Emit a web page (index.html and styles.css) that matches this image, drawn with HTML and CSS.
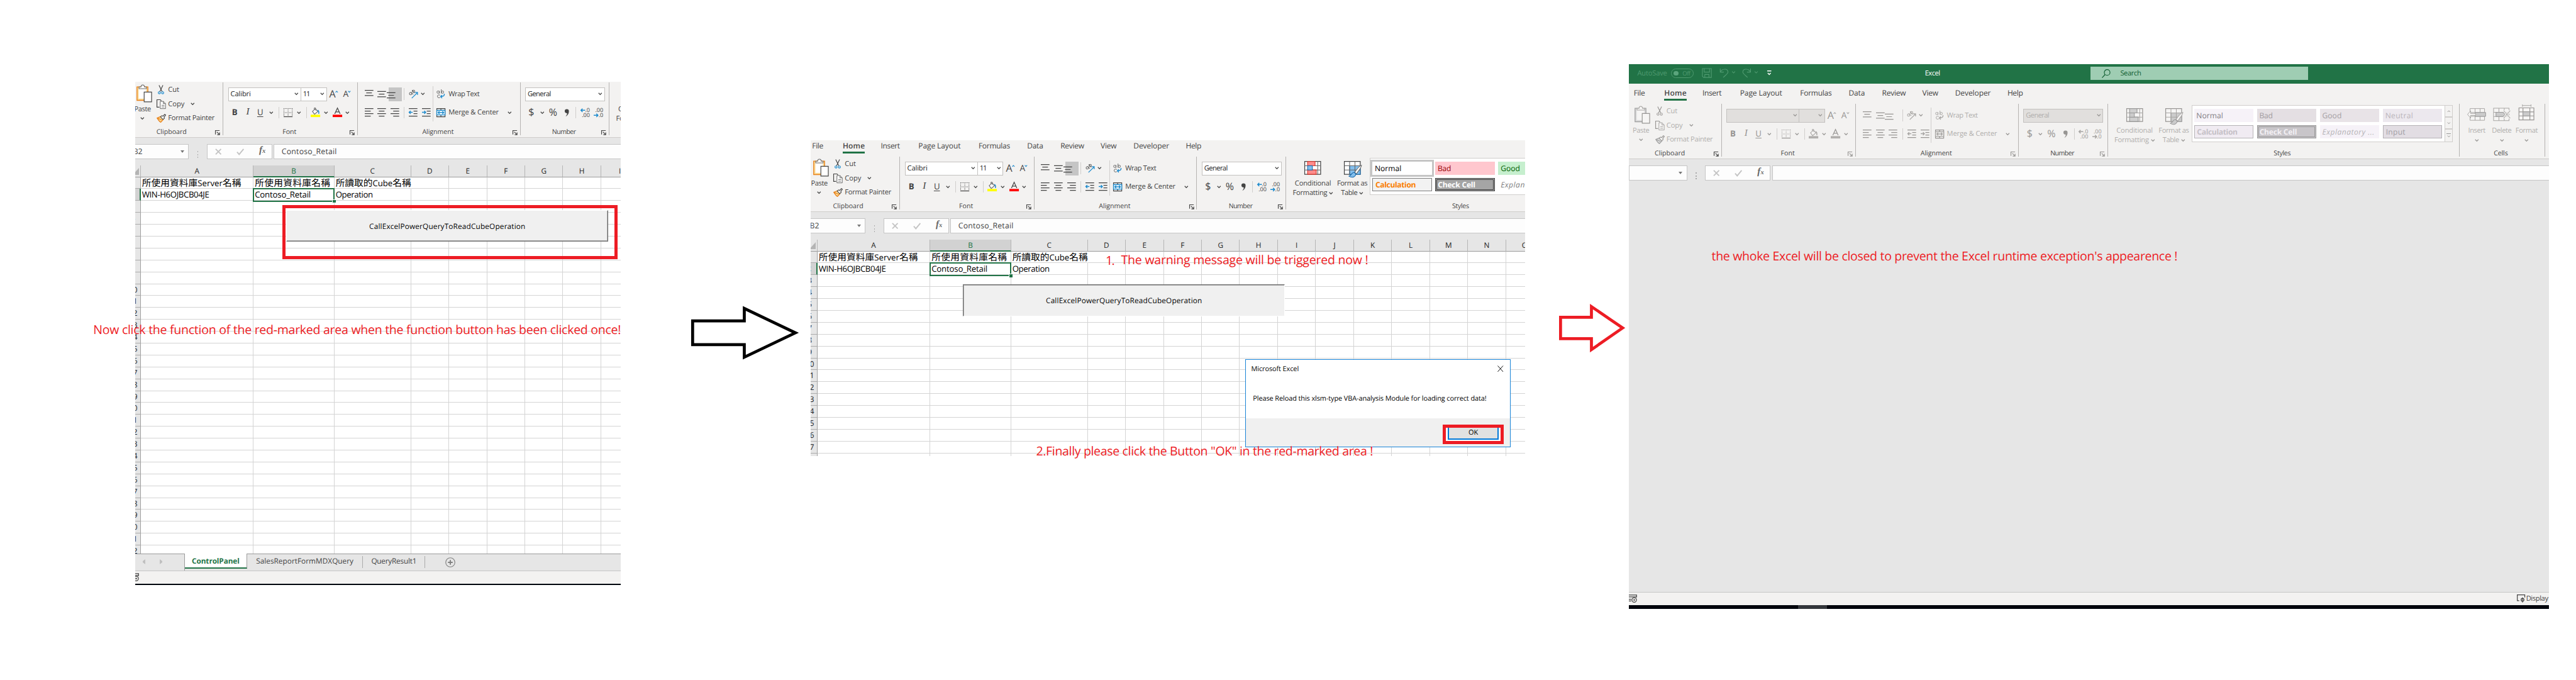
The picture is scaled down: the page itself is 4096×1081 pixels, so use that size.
FILE: index.html
```html
<!DOCTYPE html>
<html lang="en">
<head>
<meta charset="utf-8">
<title>Excel workflow</title>
<link rel="stylesheet" href="styles.css">
</head>
<body>
<svg class="defs" aria-hidden="true">
  <symbol id="chev" viewBox="0 0 7 5"><path d="M.8 .8 3.5 3.6 6.2 .8" class="s b"/></symbol>
  <symbol id="chevup" viewBox="0 0 7 5"><path d="M.8 4 3.5 1.2 6.2 4" class="s b"/></symbol>
  <symbol id="chevblue" viewBox="0 0 7 5"><path d="M.8 .8 3.5 3.6 6.2 .8" class="bl heavy"/></symbol>
  <symbol id="chevupblue" viewBox="0 0 7 5"><path d="M.8 4 3.5 1.2 6.2 4" class="bl heavy"/></symbol>
  <symbol id="paste" viewBox="0 0 28 31">
    <path d="M2 4.5h19V28H2z" class="board"/><path d="M5 7.5h13V25H5z" class="inner"/>
    <path d="M5.500 7.500v-3H9c0-4.500 6-4.500 6 0h3.500v3z" class="s w"/>
    <path d="M14.500 13.500h13v17h-13z" class="s w b"/>
  </symbol>
  <symbol id="cut" viewBox="0 0 11 17"><path d="M2 .5 7.600 12M9 .5 3.400 12" class="s b"/><circle cx="2.500" cy="14" r="1.900" class="bl"/><circle cx="8.500" cy="14" r="1.900" class="bl"/></symbol>
  <symbol id="copy" viewBox="0 0 17 17"><path d="M5 14H.6V.6h6l2 2" class="s b"/><path d="M6.500 3.500h5.500l4 4v9H6.500zM12 3.500v4h4M9 10.500h5M9 13.500h5" class="s w"/></symbol>
  <symbol id="painter" viewBox="0 0 17 16"><path d="M1 7.500 8 4.500l4 5.500-4.500 5C4.500 13.500 3 11 1 7.500z" class="brush"/><path d="M1 7.500 9.500 11" class="or"/><path d="M7 5.500 9.500 3.200l2 1L14.500 .8l1.700 1.400-2.700 3.600.5 2.200-2.700 2z" class="s w b"/></symbol>
  <symbol id="launch" viewBox="0 0 9 9"><path d="M.6 7.500V.6H8M3 3l4.500 4.500M8 3.800V8H3.800" class="s b"/></symbol>
  <symbol id="border" viewBox="0 0 15 15"><path d="M.5 0v14M14.500 0v14M7.500 0v14M0 .5h15M0 7.500h15" class="s dot"/><path d="M0 14.300h15" class="s b" stroke-width="1.600"/></symbol>
  <symbol id="fill" viewBox="0 0 16 16"><path d="M3 6.500 8 2l4 4.500-5.500 4.800zM6 4V1.800C6 0 8.500 0 8.500 1.800V5" class="s w"/><path d="M11.500 4.500c2 .5 2.500 3 2 6" class="bl heavy"/><path d="M0 12h16v4H0z" class="yellow"/></symbol>
  <symbol id="fcolor" viewBox="0 0 16 16"><path d="M3.500 10.500 8 .7l4.500 9.800M5 7.300h6" class="s b"/><path d="M0 12h16v4H0z" class="red"/></symbol>
  <symbol id="top" viewBox="0 0 15 14"><path d="M0 .6h14.500M2.500 5h9.500M0 9.400h14.500" class="s b"/></symbol>
  <symbol id="mid" viewBox="0 0 15 14"><path d="M0 2.600h14.500M2.500 7h9.500M0 11.400h14.500" class="s b"/></symbol>
  <symbol id="bot" viewBox="0 0 15 14"><path d="M0 4.600h14.500M2.500 9h9.500M0 13.400h14.500" class="s b"/></symbol>
  <symbol id="left" viewBox="0 0 15 14"><path d="M0 .7h14.500M0 4.900h10M0 9.100h14.500M0 13.300h10" class="s b"/></symbol>
  <symbol id="center" viewBox="0 0 15 14"><path d="M0 .7h14.500M2.500 4.900h9.500M0 9.100h14.500M2.500 13.300h9.500" class="s b"/></symbol>
  <symbol id="right" viewBox="0 0 15 14"><path d="M0 .7h14.500M4.500 4.900h10M0 9.100h14.500M4.500 13.300h10" class="s b"/></symbol>
  <symbol id="outdent" viewBox="0 0 15 14"><path d="M0 .7h14.500M8 4.900h6.500M8 9.100h6.500M0 13.300h14.500" class="s b"/><path d="M6.500 7H.8M3 4.500.6 7 3 9.500" class="bl heavy"/></symbol>
  <symbol id="indent" viewBox="0 0 15 14"><path d="M0 .7h14.500M8 4.900h6.500M8 9.100h6.500M0 13.300h14.500" class="s b"/><path d="M0 7h6M3.800 4.500 6.200 7 3.800 9.500" class="bl heavy"/></symbol>
  <symbol id="orient" viewBox="0 0 16 16"><circle cx="3" cy="7.300" r="2" class="s"/><path d="M3.500 4.500l4 4M5.500 1.500l4.500 4.800" class="s"/><circle cx="8" cy="3.300" r="2" class="s"/><path d="M5 15 14.500 5.500M10.500 5.200h4.200v4.200" class="bl"/></symbol>
  <symbol id="wrap" viewBox="0 0 15 17"><circle cx="2.700" cy="5" r="2.100" class="s"/><path d="M5 2.800v4.600M8.500 0v7.300M6.500 10.700c-2-1.500-5-1-5 1.800s3 3.300 5 1.800" class="s"/><circle cx="10.700" cy="5" r="2.100" class="s"/><path d="M13.800 8c.5 3-1 5-6 5M9.800 10.300 7.300 13l2.500 2.700" class="bl heavy"/></symbol>
  <symbol id="merge" viewBox="0 0 15 15"><path d="M.6 .6h13.800v13.800H.6zM7.500 .6v3M7.500 11.400v3" class="s b"/><path d="M.6 3.700h13.800v7.600H.6z" class="mergebox"/><path d="M3 7.500h9M5 5.300 2.800 7.500 5 9.700M10 5.300l2.200 2.200L10 9.700" class="bl heavy"/></symbol>
  <symbol id="comma" viewBox="0 0 9 13"><path d="M1 4a3.400 3.400 0 1 1 7 0c0 4-2 7.500-5.500 8.700C4.500 10.500 5 9 5 7.500 3 7.500 1 6.500 1 4z" class="solid"/></symbol>
  <symbol id="larr" viewBox="0 0 8 7"><path d="M8 3.500H1M3.500 .8.8 3.500l2.700 2.700" class="bl heavy"/></symbol>
  <symbol id="rarr" viewBox="0 0 8 7"><path d="M0 3.500h7M4.500 .8l2.700 2.700-2.700 2.700" class="bl heavy"/></symbol>
  <symbol id="cond" viewBox="0 0 28 23"><path d="M.6 .6h26.800v21.800H.6z" class="s w b"/><path d="M22.500 0v23M.6 8h26.800M.6 15h26.800" class="s"/><path d="M5.500 .8h12.500V8H5.500zM5.500 15h14.500v7.300H5.500z" class="pink"/><path d="M5.500 8h8v7h-8z" class="sky"/></symbol>
  <symbol id="ftable" viewBox="0 0 28 23"><path d="M.6 .6h26.800v21.800H.6z" class="s w b"/><path d="M9.500 8h18v14.400h-18z" class="sky"/><path d="M9.500 .6v21.800M18.500 .6v21.800M.6 8h26.800M.6 15h26.800" class="s"/><path d="M29.500 7c-4 1.500-8 7-11.500 12l3 2.500C25 16 29.500 11 29.500 7z" class="s w"/><path d="M17 19c-4 0-4 5-8.500 6.500 5 3.500 11 1.500 11.500-4z" class="sky"/></symbol>
  <symbol id="cins" viewBox="0 0 32 24"><path d="M4 1h26v21H4zM13 1v21M22 1v21M4 8h26M4 15h26" class="s w"/><path d="M13 8h19v7H13z" class="sky"/><path d="M14 9.800H5V5L-.5 11.500 5 18v-4.800h9z" class="s w"/></symbol>
  <symbol id="cdel" viewBox="0 0 30 24"><path d="M1 1h26v21H1zM10 1v21M19 1v21M1 8h26M1 15h26" class="s w"/><path d="M5 8h12l4 3.500-4 3.500H5z" class="sky"/><path d="M18 5l11 13M29 5 18 18" class="halo"/><path d="M18 5l11 13M29 5 18 18" class="s"/></symbol>
  <symbol id="cfmt" viewBox="0 0 28 30"><path d="M7 2h15M7 0v4M22 0v4" class="s"/><path d="M1 6h26v21H1zM8 6v21M20 6v21M1 13h26M1 20h26" class="s w b"/><path d="M8 13h12v7H8z" class="sky"/></symbol>
  <symbol id="dispset" viewBox="0 0 14 14"><path d="M4 10.500H.7V.7h12.600V5" class="s b"/><circle cx="9.500" cy="9" r="2.400" class="s b"/><path d="M9.500 5v8.500" class="s b"/></symbol>
  <symbol id="macro" viewBox="0 0 14 14"><path d="M0 1h13v4M0 4h13M0 8h4M0 11h4" class="s b"/><circle cx="9" cy="9.300" r="3.800" class="s b"/><circle cx="9" cy="9.300" r="1.300" class="solid"/></symbol>
</svg>

<main class="stage" id="stage">
  <section class="win win-one" id="one"></section>
  <section class="win win-two" id="two"></section>
  <section class="win win-three off" id="three"></section>

  <svg class="arrow arrow-black" viewBox="0 0 180 88"><path d="M3.500 23.500h87V2.500L176.500 43.500 90.500 84.500V63.500H3.500z"/></svg>
  <svg class="arrow arrow-red" viewBox="0 0 110 78"><path d="M2.500 20.500h52V2.500L107 38.500 54.500 75V56.500H2.500z"/></svg>

  <p class="note note-one"><span data-w="888">Now click the function of the red-marked area when the function button has been clicked once!</span></p>
  <p class="note note-num"><span data-w="14">1.</span></p>
  <p class="note note-two"><span data-w="416">The warning message will be triggered now !</span></p>
  <p class="note note-three"><span data-w="567">2.Finally please click the Button "OK" in the red-marked area !</span></p>
  <p class="note note-four"><span data-w="784">the whoke Excel will be closed to prevent the Excel runtime exception's appearence !</span></p>
</main>
<script src="app.js"></script>
</body>
</html>
```
FILE: styles.css
```css
* { box-sizing: border-box; }
body { margin: 0; background: #fff; overflow: hidden; }
.defs { position: absolute; width: 0; height: 0; }

.stage {
  position: relative; width: 4336px; height: 1144px; zoom: .944649;
  font: 11.8px/16px "Open Sans", "Noto Sans CJK TC", sans-serif;
  color: #444; text-rendering: geometricPrecision; white-space: nowrap;
}

/* windows on the canvas */
.win {
  position: absolute; overflow: hidden; background: #e6e6e6;
  display: flex; flex-direction: column;
  --ink: #444; --soft: #666; --blue: #1e8bcd; --orange: #e8811a; --cream: #fbdc9a;
  --pink: #ff8c8c; --pinkline: #d8352a; --sky: #83beec; --skyline: #1064a8;
  --yellow: #ff0; --red: #f00; --paper: #fff;
}
.win-one { left: 228px; top: 138px; width: 817px; height: 846px; }
.win-two { left: 1364px; top: 236px; width: 1203px; height: 531px; }
.win-three { left: 2742px; top: 108px; width: 1549px; height: 917px; }
.win-one > * { margin-left: -8px; }
.win-two > * { margin-left: -5px; }
.off {
  --ink: #979593; --soft: #a8a6a4; --blue: #a8a6a4; --orange: #a3a3a3; --cream: #dcdcdc;
  --pink: #cfcfcf; --pinkline: #999; --sky: #cbcbcb; --skyline: #999;
  --yellow: #b1afad; --red: #b1afad; --paper: #f6f5f4;
}

/* icon strokes */
svg { display: block; overflow: visible; flex: none; }
symbol { overflow: visible; }
.s { fill: none; stroke: var(--soft); stroke-width: 1.1; }
.b { stroke: var(--ink); stroke-width: 1.3; }
.w { fill: var(--paper); }
.bl { fill: none; stroke: var(--blue); stroke-width: 1.3; }
.heavy { stroke-width: 1.6; }
.or { fill: none; stroke: var(--orange); stroke-width: 1.3; }
.board { fill: var(--cream); stroke: var(--orange); stroke-width: 1.5; }
.inner { fill: var(--paper); }
.brush { fill: var(--cream); stroke: var(--orange); stroke-width: 1.5; }
.dot { stroke: var(--ink); stroke-dasharray: 1 1.300; }
.yellow { fill: var(--yellow); }
.red { fill: var(--red); }
.solid { fill: var(--ink); }
.mergebox { fill: var(--paper); stroke: var(--blue); stroke-width: 1.4; }
.pink { fill: var(--pink); stroke: var(--pinkline); stroke-width: 1.2; }
.sky { fill: var(--sky); stroke: var(--skyline); stroke-width: 1.1; }
.halo { stroke: #f3f2f1; stroke-width: 4; }

/* title bar */
.title { height: 33px; background: #217346; display: flex; align-items: center; color: #4f9a70; padding-bottom: 2px; flex: none; }
.title .auto { width: 71px; padding-left: 14px; }
.toggle { width: 38px; height: 16px; border: 1px solid #4f9a70; border-radius: 8px; display: flex; align-items: center; padding-left: 3px; gap: 7px; font-size: 10px; }
.toggle i { width: 8px; height: 8px; border-radius: 50%; background: #5ba57d; }
.title .qat { margin-left: 14px; width: 375px; }
.title .name { width: 279px; color: #fff; }
.search { width: 366px; height: 22px; background: #9fcdb3; color: #0e5c2f; display: flex; align-items: center; padding-left: 19px; gap: 16px; }

/* ribbon */
.tabs { display: grid; grid-template-columns: 51.400px 64.200px 63.300px 101.200px 81.800px 56.100px 67.600px 55.400px 88px 60px; background: #f3f2f1; align-items: end; flex: none; padding-left: 8px; font-size: 12.700px; }
.win-two .tabs { height: 27px; }
.win-three .tabs { height: 33px; }
.tabs div { height: 26px; }
.tabs .on span { font-weight: 600; display: inline-block; height: 21px; border-bottom: 3.200px solid #217346; }
.off .tabs, .off .label { color: #444; }
.ribbon { height: 94px; background: #f3f2f1; border-bottom: 1px solid #cfcdcb; display: flex; flex: none; width: 1560px; color: #444; }
.off .ribbon { color: #b1afad; }
.group { height: 89px; margin-top: 1px; border-right: 1px solid #b5b3b1; display: flex; flex-direction: column; flex: none; }
.group > .body { height: 75px; display: flex; flex: none; }
.label { display: flex; align-items: center; height: 16px; padding-right: 4px; margin-top: 1px; font-size: 11.200px; }
.label div { flex: 1; text-align: center; }
.off .g-clip .label { --ink: #444; }
.g-clip { width: 156px; } .g-font { width: 226px; } .g-align { width: 274px; }
.g-num { width: 150px; } .g-styles { width: 592px; } .g-cells { width: 144px; }
.g-clip .label div { padding-right: 15px; }
.g-clip .label div, .g-font .label div, .g-align .label div, .g-num .label div { margin-right: -10px; }

.big { display: flex; flex-direction: column; align-items: center; text-align: center; line-height: 16px; }
.big .ic { height: 33px; display: flex; align-items: flex-end; justify-content: center; padding-bottom: 3px; }
.big .ln { height: 16px; display: flex; align-items: center; justify-content: center; gap: 3px; }
.big .first { margin-top: 4px; }
.paste { width: 40px; padding-top: 3px; }
.paste .ic { padding-left: 4px; }
.paste .ln { margin-top: 1px; height: 15px; }
.cliplist { display: grid; grid-template-columns: 19px 38px 1fr; grid-auto-rows: 24px; align-items: center; padding-left: 4px; justify-items: start; }
.cliplist svg:first-child { margin-left: 2px; }
.wide { grid-column: span 2; }

.rows { display: flex; flex-direction: column; padding: 7px 0 0 8px; gap: 6px; }
.row { display: grid; height: 25px; align-items: center; justify-items: center; }
.g-font .r1 { grid-template-columns: 123px 43px 23px 22px; }
.g-font .r2 { grid-template-columns: 22px 22px 20px 17px 9px 21px 16px 10px 20px 15px 24px 10px; }
.g-align .r1, .g-align .r2 { grid-template-columns: 22px 22px 22px 9px 22px 22px; }
.g-align .r1 svg:last-child { margin-right: 13px; }
.g-num .r2 { grid-template-columns: 21px 15px 23px 23px 7px 23px 22px; }
.combo { height: 23px; width: 100%; border: 1px solid #c3c1bf; background: #fff; display: flex; align-items: center; justify-content: space-between; padding: 0 3px; color: #222; }
.combo + .combo { border-left: 0; }
.g-num .combo { width: 134px; justify-self: start; }
.off .combo { background: #e1dfdd; color: #b1afad; }
.vsep { width: 1px; height: 20px; background: #d0cecc; }
.vsep.tall { height: 59px; margin: 6px 6px 0 -1px; }
.lit { width: 22px; height: 23px; background: #c5c5c5; display: flex; align-items: center; justify-content: center; }
.off .lit { background: none; }
.sz { color: var(--ink); display: flex; align-items: center; }
.sz svg { margin: -9px 0 0 -1px; }
.a1 { font-size: 17px; } .a2 { font-size: 14.500px; }
.fmt { font-size: 14px; color: var(--ink); }
.fmt.bold { font-weight: 700; } .fmt.it { font-style: italic; font-family: "Liberation Serif", serif; font-size: 16px; }
.fmt.un { text-decoration: underline; text-underline-offset: 2.500px; }
.cur { font-size: 17px; color: var(--ink); }
.dec { display: grid; font-size: 9.500px; line-height: 8.500px; color: var(--ink); width: 15px; }
.dec div { display: flex; justify-content: flex-end; align-items: center; }
.alignrt { display: grid; grid-template-columns: 20px 99px 8px; grid-template-rows: 25px 25px; row-gap: 6px; padding-top: 7px; align-items: center; justify-items: start; }

.cond { width: 66px; margin-left: 12px; } .ftab { width: 64px; margin-left: 1px; margin-right: -2px; }
.gallery { width: 440px; height: 62px; margin-top: 2px; border: 1px solid #d0cecc; background: #fff; display: flex; flex: none; }
.swatches { display: grid; grid-template-columns: repeat(4, 100px); gap: 6px; grid-auto-rows: 22px; padding: 5px 0 0 3px; width: 427px; }
.sw { display: flex; align-items: center; padding: 0 4px; font-size: 12.800px; }
.sw-normal { background: #fff; color: #000; outline: 3.200px solid #c5c5c5; }
.sw-bad { background: #ffc7ce; color: #9c0006; }
.sw-good { background: #c6efce; color: #006100; }
.sw-neutral { background: #ffeb9c; color: #9c5700; }
.sw-calc { background: #f2f2f2; color: #fa7d00; font-weight: 700; border: 1px solid #7f7f7f; }
.sw-check { background: #a5a5a5; color: #fff; font-weight: 700; border: 3.200px double #3f3f3f; padding: 0 1px; }
.sw-exp { color: #7f7f7f; font-style: italic; }
.sw-input { background: #ffcc99; color: #3f3f76; border: 1px solid #7f7f7f; }
.off .sw-normal { background: #f6f2f8; color: #838085; outline: 0; }
.off .sw-bad { background: #e4dfe3; color: #a19ca0; }
.off .sw-good { background: #e8e3e7; color: #a5a0a4; }
.off .sw-neutral { background: #ece8ee; color: #bbb6bc; }
.off .sw-calc { background: #f0ebf2; color: #c5c0c6; border-color: #b5b3b6; }
.off .sw-check { background: #c8c5c9; color: #f3f0f4; border-color: #999; }
.off .sw-exp { background: #f6f2f8; color: #b5b2b6; }
.off .sw-input { background: #e2dde3; color: #a19da3; border-color: #b5b3b6; }
.scroll { width: 13px; border-left: 1px solid #d0cecc; display: grid; grid-template-rows: repeat(3, 1fr); background: #f3f2f1; }
.scroll div { display: flex; align-items: center; justify-content: center; border-bottom: 2.200px solid #d0cecc; }
.scroll div:last-child { border: 0; flex-direction: column; gap: 2px; }
.scroll div:last-child::before { content: ""; width: 7px; height: 1px; background: #999; }
.g-cells .body { padding-left: 8px; }
.cell-btn { width: 42px; }

/* formula bar */
.fbar { height: 46px; padding-top: 10px; display: flex; flex: none; width: 1560px; font-size: 13px; line-height: 24px; }
.box { height: 26px; background: #fdfdfd; border: 1px solid #c6c6c6; display: flex; align-items: center; flex: none; }
.namebox { width: 98px; justify-content: space-between; padding: 0 7px 0 3px; }
.tri { border: 4px solid transparent; border-top: 5px solid #777; border-bottom: 0; }
.dots { width: 30px; display: grid; place-content: center; gap: 3px; }
.dots i { width: 2px; height: 2px; background: #aaa; }
.tools { width: 110px; padding: 0 10px 0 13px; justify-content: space-between; margin-right: 3px; }
.tools path { fill: none; stroke: #c4c4c4; stroke-width: 2; }
.fx { font: italic 700 16px/20px "Liberation Serif", serif; color: #666; }
.fx small { font-size: 11px; }
.input { flex: 1; padding-left: 12px; }

/* worksheet */
.sheet { flex: none; position: relative; overflow: hidden; background: #fff; color: #000; font-size: 14px; }
.win-one .sheet { height: 654px; }
.win-two .sheet { height: 364px; }
.line { display: grid; grid-template-columns: 17px 190px 136px 129px repeat(12, 64px); height: 20px; width: 1240px; line-height: 20px; }
.line > div { border-right: 1px solid #d4d4d4; border-bottom: 1px solid #d4d4d4; padding-left: 2px; height: 20px; }
.han { font-size: 15.600px; line-height: 18px; }
.han small { font-size: 14px; }
.line .num { background: #e6e6e6; border-color: #9f9f9f; border-bottom-color: #ababab; display: flex; justify-content: flex-end; padding: 0; font-size: 13px; color: #222; }
.num span { width: 24px; flex: none; text-align: center; }
.line .num.cur-row { background: #d2d2d2; border-right: 2.200px solid #217346; color: #217346; }
.line.head > div { background: #e6e6e6; border-color: #b5b5b5; border-bottom-color: #9b9b9b; text-align: center; font-size: 12.500px; padding: 0; color: #222; }
.line.head .cur-col { background: #d2d2d2; color: #217346; border-bottom: 2.200px solid #217346; }
.line.head .corner { display: flex; justify-content: flex-end; align-items: flex-end; padding: 0 2px 3px 0; }
.corner i { border-left: 11px solid transparent; border-bottom: 12px solid #b4b4b4; }
.line > .spill { border-right-color: transparent; }
.marker { position: absolute; left: 205.500px; top: 38.500px; width: 138px; height: 23px; border: 2.200px solid #217346; }
.marker::after { content: ""; position: absolute; right: -4px; bottom: -4px; width: 5px; height: 5px; background: #217346; border: 1.100px solid #fff; border-width: 1.100px 0 0 1.100px; box-sizing: content-box; }

/* embedded macro button */
.macro { position: absolute; background: #f0f0f0; display: flex; align-items: center; justify-content: center; font-size: 12.500px; padding-top: 3px; }
.macro-one { left: 262px; top: 76px; width: 542px; height: 53px; border: 1px solid #fff; border-right: 1px solid #6a6a6a; border-bottom: 1px solid #6a6a6a; box-shadow: inset -1px -1px #a8a8a8; }
.macro-two { left: 262px; top: 76px; width: 542px; height: 53px; border-top: 1px solid #6a6a6a; border-left: 1px solid #6a6a6a; border-right: 1px solid #fff; border-bottom: 1px solid #fff; box-shadow: inset 1px 1px #a8a8a8; }
.mark { position: absolute; border: 5.300px solid #ed1c24; }
.mark-one { left: 255px; top: 67px; width: 565px; height: 91px; }

/* sheet tabs and status bar */
.sheets { height: 28px; flex: none; border-top: 1px solid #9b9b9b; display: flex; font-size: 12.500px; line-height: 26px; }
.nav { width: 91px; padding: 8px 0 0 20px; display: flex; gap: 25px; border-right: 1px solid #9b9b9b; }
.nav i { border: 4px solid transparent; border-right: 5px solid #c0c0c0; border-left: 0; height: 8px; }
.nav i + i { border-left: 5px solid #c0c0c0; border-right: 0; }
.tab { padding-left: 15px; position: relative; }
.tab.on { width: 105px; padding-left: 12px; background: #fff; margin-top: -1px; height: 25px; border-bottom: 2.200px solid #217346; border-right: 1px solid #9b9b9b; color: #217346; font-weight: 700; }
.tab.t2 { width: 195px; } .tab.t3 { width: 105px; padding-left: 14px; }
.tab.t2, .tab.t3 { border-right: 1px solid #ababab; height: 20px; margin-top: 3px; line-height: 19px; }
.plus { margin: 5px 0 0 34px; }
.plus circle, .plus path { fill: none; stroke: #808080; stroke-width: 1.200; }
.plus path { stroke-width: 2; }
.status { height: 22px; flex: none; background: #f3f2f1; border-top: 1px solid #c6c6c6; display: flex; align-items: center; justify-content: space-between; --ink: #444; --soft: #444; }
.status div { display: flex; align-items: center; gap: 2px; padding-right: 2px; }
.task { flex: none; background: #00050c; }
.win-one .task { height: 2px; }
.win-three .task { height: 7px; padding-left: 285px; }
.task i { display: block; width: 48px; height: 7px; background: #33363b; }
.empty { flex: 1; }

/* message box */
.dialog { position: absolute; left: 737px; top: 202px; width: 447px; height: 148px; background: #fff; border: 1px solid #1883d7; display: flex; flex-direction: column; color: #000; font-size: 11.600px; }
.dialog header { display: flex; justify-content: space-between; align-items: center; height: 29px; padding: 0 11px 0 9px; }
.dialog header path { stroke: #000; }
.dialog p { margin: 0; height: 69px; padding: 28px 0 0 12px; }
.dialog footer { flex: 1; background: #f0f0f0; display: flex; justify-content: flex-end; padding: 11px 11px 0 0; }
.okmark { width: 103px; height: 32px; border: 5.300px solid #ed1c24; background: #fff; padding: 0 3px 2px 4px; display: flex; }
.ok { flex: 1; background: #e1e1e1; border: 2.200px solid #0078d7; border-top: 0; text-align: center; line-height: 17px; }

/* annotations */
.note { position: absolute; margin: 0; color: #ed1c24; font-size: 20.700px; line-height: 28px; }
.note-one { left: 157px; top: 541px; }
.note-num { left: 1861px; top: 425px; }
.note-two { left: 1887px; top: 423px; }
.note-three { left: 1744px; top: 745px; }
.note-four { left: 2881px; top: 417px; }
.arrow { position: absolute; fill: #fff; stroke-width: 5; }
.arrow-black { left: 1162px; top: 517px; width: 180px; height: 88px; stroke: #000; }
.arrow-red { left: 2624px; top: 513px; width: 110px; height: 78px; stroke: #ed1c24; }
```
FILE: app.js
```js
const ic = (id, w, h) => `<svg width="${w}" height="${h}"><use href="#${id}" width="${w}" height="${h}"/></svg>`;
const chev = () => ic('chev', 7, 5);
const t = (text, w) => `<span data-w="${w}">${text}</span>`;
const sep = '<div class="vsep"></div>';

const tabs = () => `<nav class="tabs">${[['File', 18.5], ['Home', 37.5, 'on'], ['Insert', 32], ['Page Layout', 71],
  ['Formulas', 53], ['Data', 27], ['Review', 40], ['View', 27], ['Developer', 60], ['Help', 26]]
  .map(([n, w, c]) => `<div class="${c || ''}">${t(n, w)}</div>`).join('')}</nav>`;

const label = (text, w, launch) => `<div class="label"><div>${t(text, w)}</div>${launch ? ic('launch', 8.5, 8.5) : ''}</div>`;

const styles = [['normal', 'Normal', 45], ['bad', 'Bad', 22.5], ['good', 'Good', 32.5], ['neutral', 'Neutral', 47],
  ['calc', 'Calculation', 68], ['check', 'Check Cell', 63], ['exp', 'Explanatory ...', 88], ['input', 'Input', 33]];

const ribbon = (off, wide) => `<div class="ribbon">
  <div class="group g-clip"><div class="body">
    <div class="big paste"><div class="ic">${ic('paste', 27, 30)}</div><div class="ln">${t('Paste', 28)}</div><div class="ln">${chev()}</div></div>
    <div class="cliplist">
      ${ic('cut', 10.5, 16)}<div class="wide">${t('Cut', 18.5)}</div>
      ${ic('copy', 16, 16)}${t('Copy', 27.5)}${chev()}
      ${ic('painter', 16, 15)}<div class="wide">${t('Format Painter', 78)}</div>
    </div></div>${label('Clipboard', 51, 1)}</div>
  <div class="group g-font"><div class="body"><div class="rows">
    <div class="row r1"><div class="combo">${off ? '<span></span>' : t('Calibri', 34)}${chev()}</div>
      <div class="combo">${off ? '<span></span>' : t('11', 11)}${chev()}</div>
      <div class="sz a1">A${ic('chevupblue', 5, 4)}</div><div class="sz a2">A${ic('chevblue', 5, 4)}</div></div>
    <div class="row r2"><b class="fmt bold">B</b><span class="fmt it">I</span><span class="fmt un">U</span>${chev()}${sep}
      ${ic('border', 15, 15)}${chev()}${sep}${ic('fill', 16, 16)}${chev()}${ic('fcolor', 16, 16)}${chev()}</div>
    </div></div>${label('Font', 23.5, 1)}</div>
  <div class="group g-align"><div class="body"><div class="rows">
    <div class="row r1">${ic('top', 15, 14)}${ic('mid', 15, 14)}<div class="lit">${ic('bot', 15, 14)}</div>${sep}${ic('orient', 16, 16)}${chev()}</div>
    <div class="row r2">${ic('left', 15, 14)}${ic('center', 15, 14)}${ic('right', 15, 14)}${sep}${ic('outdent', 15, 14)}${ic('indent', 15, 14)}</div>
    </div><div class="vsep tall"></div>
    <div class="alignrt">${ic('wrap', 14.5, 16)}${t('Wrap Text', 52)}<i></i>${ic('merge', 15, 15)}${t('Merge &amp; Center', 84.5)}${chev()}</div>
    </div>${label('Alignment', 53, 1)}</div>
  <div class="group g-num"><div class="body"><div class="rows">
    <div class="row"><div class="combo">${t('General', 39)}${chev()}</div></div>
    <div class="row r2"><span class="cur">$</span>${chev()}<span class="cur">${t('%', 15)}</span>${ic('comma', 9, 13)}${sep}
      <div class="dec"><div>${ic('larr', 8, 7)}.0</div><div>.00</div></div>
      <div class="dec"><div>.00</div><div>${ic('rarr', 8, 7)}.0</div></div></div>
    </div></div>${label('Number', 40, 1)}</div>
  <div class="group g-styles"><div class="body">
    <div class="big cond"><div class="ic">${ic('cond', 28, 23)}</div><div class="ln first">${t('Conditional', 61)}</div><div class="ln">${t('Formatting', 58)}${chev()}</div></div>
    <div class="big ftab"><div class="ic">${ic('ftable', 28, 23)}</div><div class="ln first">${t('Format as', 51)}</div><div class="ln">${t('Table', 27.5)}${chev()}</div></div>
    <div class="gallery"><div class="swatches">${styles.map(([c, n, w]) => `<div class="sw sw-${c}">${t(n, w)}</div>`).join('')}</div>
      <div class="scroll"><div>${ic('chevup', 6, 4)}</div><div>${ic('chev', 6, 4)}</div><div>${ic('chev', 6, 4)}</div></div></div>
    </div>${label('Styles', 28.5)}</div>
  ${wide ? `<div class="group g-cells"><div class="body">
    ${[['cins', 'Insert', 29], ['cdel', 'Delete', 33], ['cfmt', 'Format', 37.5]].map(([i, n, w]) =>
      `<div class="big cell-btn"><div class="ic">${ic(i, 30, i === 'cfmt' ? 29 : 24)}</div><div class="ln first">${t(n, w)}</div><div class="ln">${chev()}</div></div>`).join('')}
    </div>${label('Cells', 23.5)}</div>` : ''}
</div>`;

const fbar = (name, text) => `<div class="fbar">
  <div class="box namebox"><span>${name}</span><i class="tri"></i></div>
  <div class="dots"><i></i><i></i><i></i></div>
  <div class="box tools"><svg width="11" height="11"><path d="M1 1l9 9M10 1 1 10"/></svg><svg width="13" height="11"><path d="M1 6l3.500 4L12 1"/></svg><span class="fx">f<small>x</small></span></div>
  <div class="box input">${text ? t(text, 93) : ''}</div></div>`;

const han = (text, w) => `<span class="han" data-w="${w}">${text}</span>`;
const data = {
  1: [han('所使用資料庫<small>Server</small>名稱', 167), han('所使用資料庫名稱', 127), han('所讀取的<small>Cube</small>名稱', 127)],
  2: [t('WIN-H6OJBCB04JE', 113), t('Contoso_Retail', 94), t('Operation', 62.5)]
};
const sheet = (rows, extra) => {
  const cols = 'ABCDEFGHIJKLMNO'.split('');
  let h = `<div class="line head"><div class="corner"><i></i></div>${cols.map(c => `<div class="${c === 'B' ? 'cur-col' : ''}">${c}</div>`).join('')}</div>`;
  for (let r = 1; r <= rows; r++) {
    h += `<div class="line"><div class="num ${r === 2 ? 'cur-row' : ''}"><span>${r}</span></div>${cols.map((c, i) =>
      `<div class="${r === 1 && c === 'C' ? 'spill' : ''}">${(data[r] || [])[i] || ''}</div>`).join('')}</div>`;
  }
  return `<div class="sheet">${h}<div class="marker"></div>${extra}</div>`;
};
const macro = t('CallExcelPowerQueryToReadCubeOperation', 263);

document.getElementById('one').innerHTML = ribbon(false) + fbar('B2', 'Contoso_Retail') +
  sheet(32, `<div class="macro macro-one">${macro}</div><div class="mark mark-one"></div>`) +
  `<div class="sheets"><div class="nav"><i></i><i></i></div><div class="tab on">${t('ControlPanel', 80)}</div>
   <div class="tab t2">${t('SalesReportFormMDXQuery', 164)}</div><div class="tab t3">${t('QueryResult1', 76)}</div>
   <svg class="plus" width="17" height="17"><circle cx="8.500" cy="8.500" r="7.700"/><path d="M8.500 4.500v8M4.500 8.500h8"/></svg></div>
   <div class="status">${ic('macro', 14, 14)}</div><div class="task"></div>`;

document.getElementById('two').innerHTML = tabs() + ribbon(false) + fbar('B2', 'Contoso_Retail') +
  sheet(18, `<div class="macro macro-two">${macro}</div>
   <div class="dialog"><header>${t('Microsoft Excel', 80)}<svg width="10" height="11"><path d="M.5 .5l9 10M9.500 .5l-9 10"/></svg></header>
   <p>${t('Please Reload this xlsm-type VBA-analysis Module for loading correct data!', 393)}</p>
   <footer><div class="okmark"><div class="ok">${t('OK', 16)}</div></div></footer></div>`);

document.getElementById('three').innerHTML = `<div class="title"><div class="auto">${t('AutoSave', 50)}</div>
   <div class="toggle"><i></i>${t('Off', 13)}</div>
   <svg class="qat" height="18" fill="none" stroke="#4f9a70" stroke-width="1.200"><path d="M1 1h15v15H3l-2-2zM4 1v6h9V1M5 16v-5h7v5"/>
   <path d="M31 1v6h6M31 7c3-6 13-7 13 0 0 3-4 5-8 9M51 6l2.500 2.500L56 6M82 1v6h-6M82 7c-3-6-13-7-13 0 0 3 4 5 8 9M89 6l2.500 2.500L94 6"/>
   <path d="M110 5h7M111 8.500l2.500 2.500 2.500-2.500" stroke="#fff" stroke-width="1.500"/></svg>
   <div class="name">${t('Excel', 25.5)}</div>
   <div class="search"><svg width="15" height="15" fill="none" stroke="#0e5c2f" stroke-width="1.200"><circle cx="9" cy="5.500" r="4.800"/><path d="M5.500 9 .5 14.500"/></svg>${t('Search', 35)}</div></div>` +
  tabs() + ribbon(true, true) + fbar('', '') +
  `<div class="empty"></div><div class="status">${ic('macro', 14, 14)}<div>${ic('dispset', 14, 14)}${t('Display', 37)}</div></div><div class="task"><i></i></div>`;

// Tune tracking so that every label takes the width set for it.
const scale = document.getElementById('stage').getBoundingClientRect().width / 4336;
document.querySelectorAll('[data-w]').forEach(el => {
  const width = () => el.getBoundingClientRect().width;
  const natural = width();
  el.style.letterSpacing = '1px';
  const step = width() - natural;
  el.style.letterSpacing = ((el.dataset.w * scale - natural) / step).toFixed(3) + 'px';
});
```
